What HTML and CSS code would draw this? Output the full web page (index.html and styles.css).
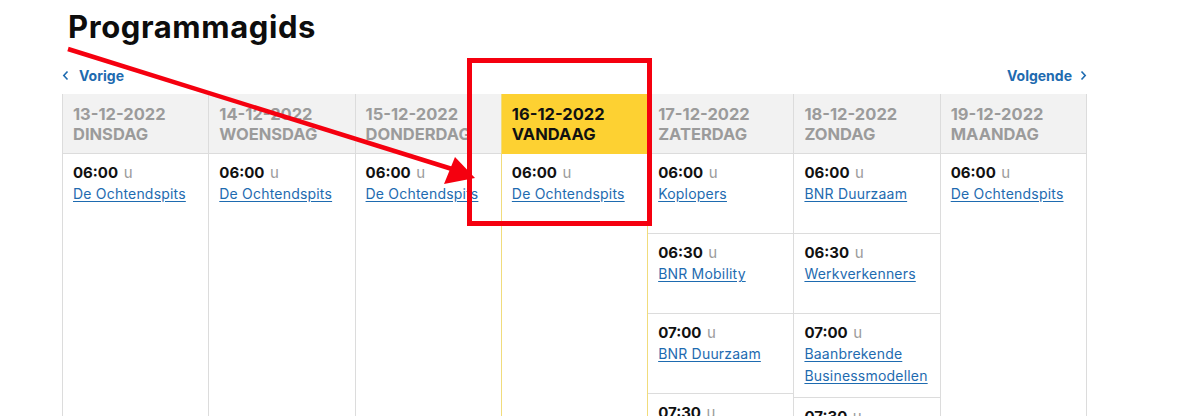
FILE: index.html
```html
<!DOCTYPE html>
<html lang="nl">
<head>
<meta charset="utf-8">
<title>Programmagids</title>
<link rel="stylesheet" href="styles.css">
</head>
<body>
<div class="page">
  <h1 class="title">Programmagids</h1>
  <div class="nav">
    <a class="nav-link" href="#"><svg class="chev" width="7" height="11" viewBox="0 0 7 11"><path d="M5.5 1.5 L1.8 5.5 L5.5 9.5" fill="none" stroke="#1e6bb0" stroke-width="1.6"/></svg>Vorige</a>
    <a class="nav-link" href="#">Volgende<svg class="chev chev-r" width="7" height="11" viewBox="0 0 7 11"><path d="M1.5 1.5 L5.2 5.5 L1.5 9.5" fill="none" stroke="#1e6bb0" stroke-width="1.6"/></svg></a>
  </div>
  <div class="guide">
    <div class="col">
      <div class="head">13-12-2022<br>DINSDAG</div>
      <div class="item"><div class="time">06:00 <span class="u">u</span></div><a class="show" href="#">De Ochtendspits</a></div>
    </div>
    <div class="col">
      <div class="head">14-12-2022<br>WOENSDAG</div>
      <div class="item"><div class="time">06:00 <span class="u">u</span></div><a class="show" href="#">De Ochtendspits</a></div>
    </div>
    <div class="col">
      <div class="head">15-12-2022<br>DONDERDAG</div>
      <div class="item"><div class="time">06:00 <span class="u">u</span></div><a class="show" href="#">De Ochtendspits</a></div>
    </div>
    <div class="col today">
      <div class="head">16-12-2022<br>VANDAAG</div>
      <div class="item"><div class="time">06:00 <span class="u">u</span></div><a class="show" href="#">De Ochtendspits</a></div>
    </div>
    <div class="col">
      <div class="head">17-12-2022<br>ZATERDAG</div>
      <div class="item"><div class="time">06:00 <span class="u">u</span></div><a class="show" href="#">Koplopers</a></div>
      <div class="item"><div class="time">06:30 <span class="u">u</span></div><a class="show" href="#">BNR Mobility</a></div>
      <div class="item"><div class="time">07:00 <span class="u">u</span></div><a class="show" href="#">BNR Duurzaam</a></div>
      <div class="item"><div class="time">07:30 <span class="u">u</span></div><a class="show" href="#">BNR Zakendoen</a></div>
    </div>
    <div class="col">
      <div class="head">18-12-2022<br>ZONDAG</div>
      <div class="item"><div class="time">06:00 <span class="u">u</span></div><a class="show" href="#">BNR Duurzaam</a></div>
      <div class="item"><div class="time">06:30 <span class="u">u</span></div><a class="show" href="#">Werkverkenners</a></div>
      <div class="item"><div class="time">07:00 <span class="u">u</span></div><a class="show" href="#">Baanbrekende Businessmodellen</a></div>
      <div class="item"><div class="time">07:30 <span class="u">u</span></div><a class="show" href="#">BNR Mobility</a></div>
    </div>
    <div class="col">
      <div class="head">19-12-2022<br>MAANDAG</div>
      <div class="item"><div class="time">06:00 <span class="u">u</span></div><a class="show" href="#">De Ochtendspits</a></div>
    </div>
  </div>
</div>
<svg class="annot" width="1196" height="416" viewBox="0 0 1196 416">
  <line x1="68" y1="49" x2="452" y2="169" stroke="#f5000f" stroke-width="4.5"/>
  <polygon points="475,178 444,184 455,157" fill="#f5000f"/>
  <rect x="469.5" y="60.5" width="180" height="163" fill="none" stroke="#f5000f" stroke-width="5"/>
</svg>
</body>
</html>
```
FILE: styles.css
```css
html, body {
  margin: 0;
  padding: 0;
  background: #fff;
}
body {
  font-family: Inter, "Noto Sans", sans-serif;
  color: #111;
  overflow: hidden;
}
.page {
  width: 1025px;
  margin-left: 62px;
  padding-top: 7px;
}
.title {
  margin: 0 0 0 6px;
  font-size: 31px;
  line-height: 40px;
  font-weight: 700;
  letter-spacing: 0.6px;
  color: #0d0d0d;
}
.nav {
  display: flex;
  justify-content: space-between;
  align-items: center;
  margin-top: 18px;
  height: 20px;
  margin-bottom: 9px;
}
.nav-link {
  display: flex;
  align-items: center;
  font-size: 14px;
  font-weight: 700;
  color: #1e6bb0;
  text-decoration: none;
}
.chev {
  margin-right: 10px;
}
.chev-r {
  margin-right: 0;
  margin-left: 8px;
}
.guide {
  display: grid;
  grid-template-columns: repeat(7, 1fr);
  min-height: 420px;
  border-right: 1px solid #dcdcdc;
}
.col {
  border-left: 1px solid #dcdcdc;
  display: flex;
  flex-direction: column;
}
.col.today {
  border-left-color: #f1dc7c;
}
.col.today + .col {
  border-left-color: #f1dc7c;
}
.head {
  box-sizing: border-box;
  height: 60px;
  padding: 10px 10px 0;
  background: #f2f2f2;
  border-bottom: 1px solid #dcdcdc;
  font-size: 16.5px;
  line-height: 20px;
  font-weight: 700;
  color: #9b9b9b;
  white-space: nowrap;
  overflow: hidden;
}
.today .head {
  background: #fdd132;
  border-bottom-color: #fdd132;
  color: #111;
}
.item {
  box-sizing: border-box;
  min-height: 80px;
  padding: 9px 10px 10px;
  border-bottom: 1px solid #dcdcdc;
}
.item:last-child {
  border-bottom: none;
}
.time {
  font-size: 15px;
  line-height: 20px;
  font-weight: 700;
  color: #111;
}
.u {
  font-weight: 400;
  color: #9b9b9b;
  margin-left: 2px;
}
.show {
  font-size: 14px;
  line-height: 22px;
  letter-spacing: 0.2px;
  color: #1e6bb0;
  text-decoration: underline;
  text-underline-offset: 2px;
}
.annot {
  position: absolute;
  left: 0;
  top: 0;
  pointer-events: none;
}
```
